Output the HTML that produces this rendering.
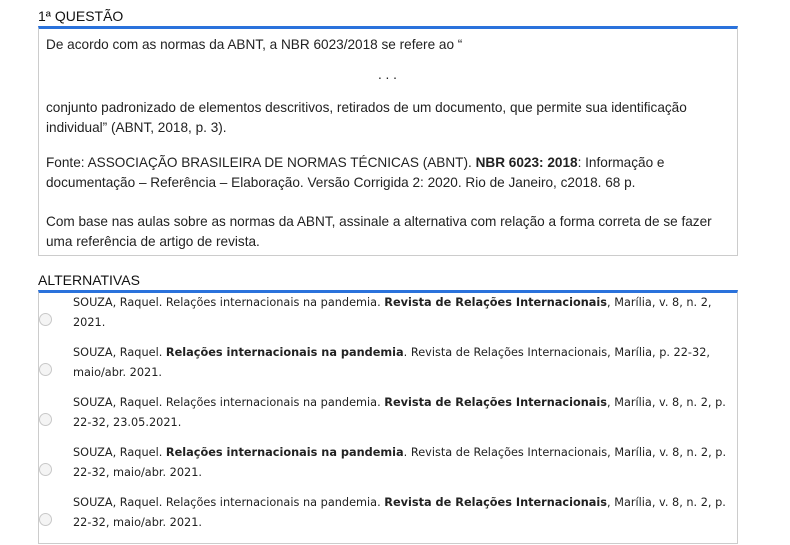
<!DOCTYPE html>
<html><head><meta charset="utf-8"><style>
body{margin:0;width:790px;height:545px;background:#fff;position:relative;overflow:hidden;font-family:"DejaVu Sans",Verdana,sans-serif;color:#222}
.t{position:absolute;white-space:nowrap}
.q{font-family:"Liberation Sans",sans-serif;font-size:13.6px;color:#222}
.h{font-family:"Liberation Sans",sans-serif;font-size:14px;color:#111}
.box{position:absolute;border:1px solid #ccc;border-top:3px solid #2a72dc;box-sizing:border-box}
.a{font-size:11.3px;color:#222}
.r{position:absolute;left:39px;width:13px;height:13px;border:1px solid #c8c8c8;border-radius:50%;background:#f4f4f4;box-sizing:border-box}
</style></head><body>
<div class="t h" style="left:38px;top:8px">1ª QUESTÃO</div>
<div class="box" style="left:38px;top:26px;width:700px;height:230px"></div>
<div class="t q" style="left:46px;top:37px">De acordo com as normas da ABNT, a NBR 6023/2018 se refere ao “</div>
<div class="t q" style="left:378px;top:67px">. . .</div>
<div class="t q" style="left:46px;top:100px">conjunto padronizado de elementos descritivos, retirados de um documento, que permite sua identificação</div>
<div class="t q" style="left:46px;top:120px">individual” (ABNT, 2018, p. 3).</div>
<div class="t q" style="left:46px;top:155px">Fonte: ASSOCIAÇÃO BRASILEIRA DE NORMAS TÉCNICAS (ABNT). <b>NBR 6023: 2018</b>: Informação e</div>
<div class="t q" style="left:46px;top:175px">documentação – Referência – Elaboração. Versão Corrigida 2: 2020. Rio de Janeiro, c2018. 68 p.</div>
<div class="t q" style="left:46px;top:214px">Com base nas aulas sobre as normas da ABNT, assinale a alternativa com relação a forma correta de se fazer</div>
<div class="t q" style="left:46px;top:234px">uma referência de artigo de revista.</div>

<div class="t h" style="left:38px;top:272px">ALTERNATIVAS</div>
<div class="box" style="left:38px;top:290px;width:700px;height:254px"></div>

<div class="t a" style="left:73px;top:296px">SOUZA, Raquel. Relações internacionais na pandemia. <b>Revista de Relações Internacionais</b>, Marília, v. 8, n. 2,</div>
<div class="t a" style="left:73px;top:316px">2021.</div>
<div class="r" style="top:313px"></div>

<div class="t a" style="left:73px;top:346px">SOUZA, Raquel. <b>Relações internacionais na pandemia</b>. Revista de Relações Internacionais, Marília, p. 22-32,</div>
<div class="t a" style="left:73px;top:366px">maio/abr. 2021.</div>
<div class="r" style="top:363px"></div>

<div class="t a" style="left:73px;top:396px">SOUZA, Raquel. Relações internacionais na pandemia. <b>Revista de Relações Internacionais</b>, Marília, v. 8, n. 2, p.</div>
<div class="t a" style="left:73px;top:416px">22-32, 23.05.2021.</div>
<div class="r" style="top:413px"></div>

<div class="t a" style="left:73px;top:446px">SOUZA, Raquel. <b>Relações internacionais na pandemia</b>. Revista de Relações Internacionais, Marília, v. 8, n. 2, p.</div>
<div class="t a" style="left:73px;top:466px">22-32, maio/abr. 2021.</div>
<div class="r" style="top:463px"></div>

<div class="t a" style="left:73px;top:496px">SOUZA, Raquel. Relações internacionais na pandemia. <b>Revista de Relações Internacionais</b>, Marília, v. 8, n. 2, p.</div>
<div class="t a" style="left:73px;top:516px">22-32, maio/abr. 2021.</div>
<div class="r" style="top:513px"></div>
</body></html>
